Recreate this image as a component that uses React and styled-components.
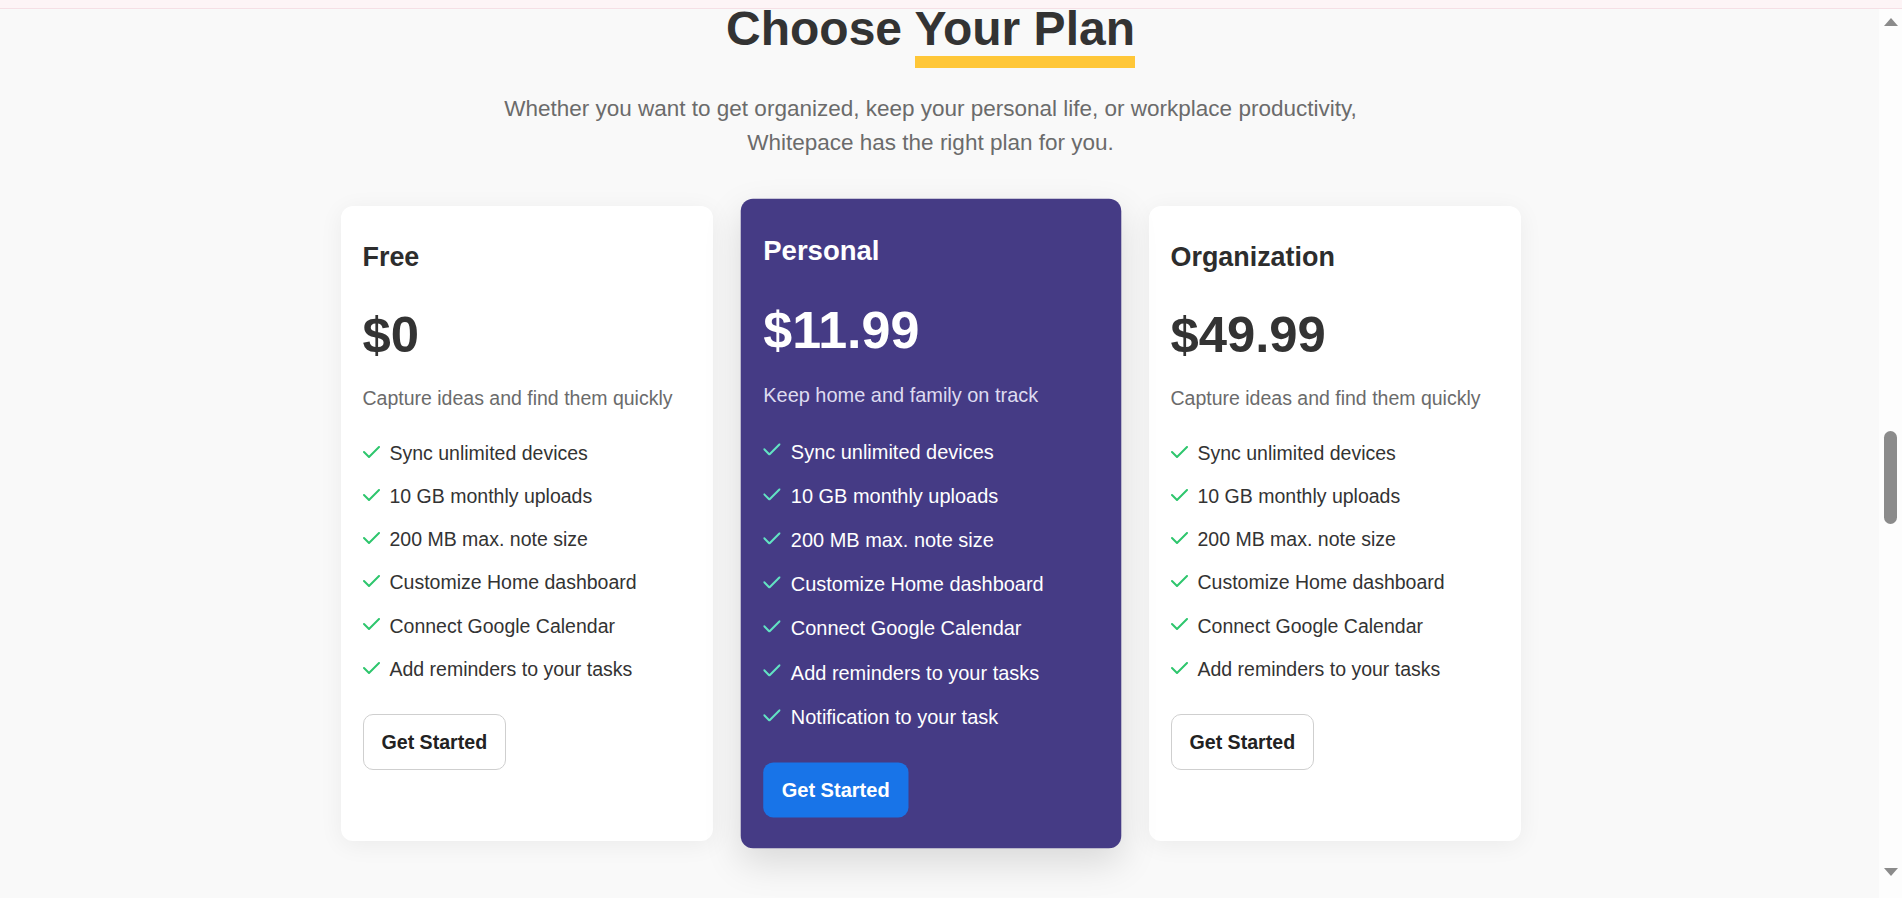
import styled, { createGlobalStyle } from 'styled-components';

const plans = [
  {
    name: 'Free',
    price: '$0',
    text: 'Capture ideas and find them quickly',
    features: [
      'Sync unlimited devices',
      '10 GB monthly uploads',
      '200 MB max. note size',
      'Customize Home dashboard',
      'Connect Google Calendar',
      'Add reminders to your tasks',
    ],
  },
  {
    name: 'Personal',
    price: '$11.99',
    text: 'Keep home and family on track',
    featured: true,
    features: [
      'Sync unlimited devices',
      '10 GB monthly uploads',
      '200 MB max. note size',
      'Customize Home dashboard',
      'Connect Google Calendar',
      'Add reminders to your tasks',
      'Notification to your task',
    ],
  },
  {
    name: 'Organization',
    price: '$49.99',
    text: 'Capture ideas and find them quickly',
    features: [
      'Sync unlimited devices',
      '10 GB monthly uploads',
      '200 MB max. note size',
      'Customize Home dashboard',
      'Connect Google Calendar',
      'Add reminders to your tasks',
    ],
  },
];

function CheckIcon({ featured }) {
  return (
    <CheckMark viewBox="0 0 17 12" $featured={featured}>
      <polyline points="1,6 6,11 16,1" />
    </CheckMark>
  );
}

function App() {
  return (
    <>
      <GlobalStyle />
      <Page>
        <TopStrip />
        <Body>
          <Main>
            <Title>
              Choose <Marked>Your Plan</Marked>
            </Title>
            <Subtitle>
              Whether you want to get organized, keep your personal life, or workplace productivity,
              <br />
              Whitepace has the right plan for you.
            </Subtitle>
            <Cards>
              {plans.map((plan) => (
                <Card key={plan.name} $featured={plan.featured}>
                  <PlanName $featured={plan.featured}>{plan.name}</PlanName>
                  <Price $featured={plan.featured}>{plan.price}</Price>
                  <PlanText $featured={plan.featured}>{plan.text}</PlanText>
                  <Features>
                    {plan.features.map((f) => (
                      <Feature key={f} $featured={plan.featured}>
                        <CheckIcon featured={plan.featured} />
                        <span>{f}</span>
                      </Feature>
                    ))}
                  </Features>
                  <StartButton $featured={plan.featured}>Get Started</StartButton>
                </Card>
              ))}
            </Cards>
          </Main>
          <ScrollTrack>
            <ArrowUp />
            <Thumb />
            <ArrowDown />
          </ScrollTrack>
        </Body>
      </Page>
    </>
  );
}

const GlobalStyle = createGlobalStyle`
  html, body {
    margin: 0;
    padding: 0;
    background: #f9f9f9;
    overflow: hidden;
  }
  body {
    font-family: "Liberation Sans", Arial, sans-serif;
  }
`;

const Page = styled.div`
  height: 100vh;
  display: flex;
  flex-direction: column;
  background: #f9f9f9;
`;

const TopStrip = styled.div`
  height: 8px;
  flex-shrink: 0;
  background: #fdf4f6;
  border-bottom: 1px solid #f5dfe5;
`;

const Body = styled.div`
  flex: 1;
  display: flex;
  min-height: 0;
`;

const Main = styled.main`
  flex: 1;
  display: flex;
  flex-direction: column;
  align-items: center;
  padding-right: 18px;
`;

const Title = styled.h2`
  margin: 0;
  font-size: 48px;
  line-height: 40px;
  font-weight: 700;
  color: #333333;
`;

const Marked = styled.span`
  position: relative;

  &::after {
    content: '';
    position: absolute;
    left: 0;
    right: 0;
    bottom: -13px;
    height: 12px;
    background: #ffc738;
  }
`;

const Subtitle = styled.p`
  margin: 43px 0 0 0;
  font-size: 22.5px;
  line-height: 33.6px;
  color: #6b6b6b;
  text-align: center;
`;

const Cards = styled.div`
  margin-top: 47px;
  display: flex;
  align-items: stretch;
  gap: 32px;
`;

const Card = styled.div`
  width: 372px;
  box-sizing: border-box;
  padding: 36px 21px 30px 22px;
  display: flex;
  flex-direction: column;
  align-items: flex-start;
  border-radius: 12px;
  background: ${(p) => (p.$featured ? '#453b85' : '#ffffff')};
  box-shadow: ${(p) =>
    p.$featured ? '0 14px 36px rgba(0, 0, 0, 0.13)' : '0 4px 24px rgba(0, 0, 0, 0.06)'};
  transform: ${(p) => (p.$featured ? 'scale(1.023)' : 'none')};
`;

const PlanName = styled.h3`
  margin: 0;
  font-size: 26.9px;
  line-height: 31.8px;
  font-weight: 700;
  color: ${(p) => (p.$featured ? '#ffffff' : '#2d2d2d')};
`;

const Price = styled.div`
  margin-top: 31px;
  font-size: 50.8px;
  line-height: 60px;
  font-weight: 700;
  color: ${(p) => (p.$featured ? '#ffffff' : '#333333')};
`;

const PlanText = styled.p`
  margin: 19px 0 0 0;
  font-size: 19.5px;
  line-height: 28.8px;
  color: ${(p) => (p.$featured ? '#dedbf0' : '#6b6b6b')};
`;

const Features = styled.ul`
  margin: 26px 0 0 0;
  padding: 0;
  list-style: none;
  display: flex;
  flex-direction: column;
  gap: 14.4px;
`;

const Feature = styled.li`
  display: flex;
  align-items: center;
  gap: 10px;
  font-size: 19.5px;
  line-height: 28.8px;
  color: ${(p) => (p.$featured ? '#ffffff' : '#333333')};
`;

const CheckMark = styled.svg`
  width: 17px;
  height: 12px;
  flex-shrink: 0;
  margin-bottom: 3px;
  fill: none;
  stroke: ${(p) => (p.$featured ? '#62e3c3' : '#2ec66d')};
  stroke-width: 2;
  stroke-linecap: round;
  stroke-linejoin: round;
`;

const StartButton = styled.button`
  margin-top: 30px;
  padding: 16px 18px;
  font-family: inherit;
  font-size: 19.6px;
  line-height: 22px;
  font-weight: 700;
  border-radius: 10px;
  cursor: pointer;
  border: ${(p) => (p.$featured ? 'none' : '1px solid #cfcfcf')};
  background: ${(p) => (p.$featured ? '#1874e8' : '#ffffff')};
  color: ${(p) => (p.$featured ? '#ffffff' : '#222222')};
`;

const ScrollTrack = styled.div`
  width: 23px;
  flex-shrink: 0;
  display: flex;
  flex-direction: column;
  align-items: center;
  padding: 9px 0 22px;
  box-sizing: border-box;
  background: #fdfdfd;
`;

const ArrowUp = styled.div`
  width: 0;
  height: 0;
  border-left: 7px solid transparent;
  border-right: 7px solid transparent;
  border-bottom: 8px solid #8b8b8b;
`;

const ArrowDown = styled.div`
  margin-top: auto;
  width: 0;
  height: 0;
  border-left: 7px solid transparent;
  border-right: 7px solid transparent;
  border-top: 8px solid #8b8b8b;
`;

const Thumb = styled.div`
  margin-top: 405px;
  width: 13px;
  height: 93px;
  border-radius: 7px;
  background: #8b8b8b;
`;

export default App;
